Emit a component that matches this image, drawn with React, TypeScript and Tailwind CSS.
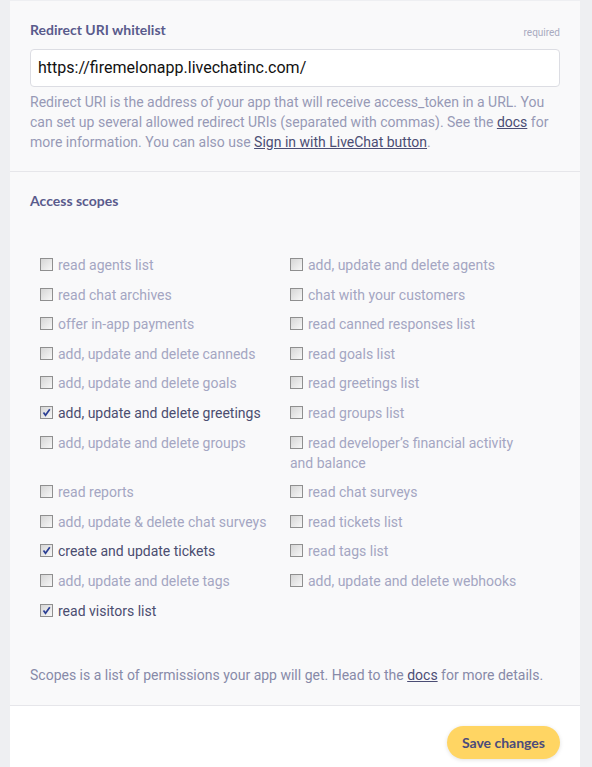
import React from 'react';

type Scope = { label: string; checked?: boolean };

const scopes: Scope[] = [
  { label: 'read agents list' },
  { label: 'add, update and delete agents' },
  { label: 'read chat archives' },
  { label: 'chat with your customers' },
  { label: 'offer in-app payments' },
  { label: 'read canned responses list' },
  { label: 'add, update and delete canneds' },
  { label: 'read goals list' },
  { label: 'add, update and delete goals' },
  { label: 'read greetings list' },
  { label: 'add, update and delete greetings', checked: true },
  { label: 'read groups list' },
  { label: 'add, update and delete groups' },
  { label: 'read developer’s financial activity and balance' },
  { label: 'read reports' },
  { label: 'read chat surveys' },
  { label: 'add, update & delete chat surveys' },
  { label: 'read tickets list' },
  { label: 'create and update tickets', checked: true },
  { label: 'read tags list' },
  { label: 'add, update and delete tags' },
  { label: 'add, update and delete webhooks' },
  { label: 'read visitors list', checked: true },
];

const Checkbox: React.FC<{ checked?: boolean }> = ({ checked }) => (
  <span className="relative inline-block w-[13px] h-[13px] mr-[5px] align-[-1px] border border-[#8f8f8f] bg-gradient-to-br from-[#d6d6d6] to-[#f7f7f7]">
    {checked && (
      <svg viewBox="0 0 11 11" className="absolute inset-0 w-[11px] h-[11px]">
        <path d="M2.5 5.5 L4.5 8.2 L8.8 2.2" fill="none" stroke="#2b3f94" strokeWidth="1.7" />
      </svg>
    )}
  </span>
);

const App: React.FC = () => {
  return (
    <div className="h-screen overflow-hidden bg-[#eeeff2] pt-px pl-[10px] pr-[12px] font-['Roboto',sans-serif]">
      <div className="bg-[#f9f9fa]">
        {/* redirect uri */}
        <div className="px-5 pt-5 pb-[19px] border-b border-[#e6e6ea]">
          <div className="flex items-end justify-between mb-[10px]">
            <h3 className="font-['Lato',sans-serif] text-[14px] leading-[18px] font-bold text-[#595b8c]">Redirect URI whitelist</h3>
            <span className="text-[10px] leading-[12px] text-[#a8aac0]">required</span>
          </div>
          <div className="h-[38px] bg-white border border-[#dcdde3] rounded-[4px] flex items-center pl-[7px] text-[16px] text-[#111]">
            https://firemelonapp.livechatinc.com/
          </div>
          <p className="mt-[5px] text-[14px] leading-[20px] text-[#9799b6]">
            Redirect URI is the address of your app that will receive access_token in a URL. You can set up several allowed redirect URIs (separated with commas). See the{' '}
            <a className="underline text-[#4b4d74]">docs</a> for more information. You can also use{' '}
            <a className="underline text-[#4b4d74]">Sign in with LiveChat button</a>.
          </p>
        </div>

        {/* scopes */}
        <div className="px-5 pt-5 pb-5 border-b border-[#e6e6ea]">
          <h3 className="font-['Lato',sans-serif] text-[14px] leading-[18px] font-bold text-[#595b8c]">Access scopes</h3>
          <div className="mt-[45px] ml-[10px] grid grid-cols-[250px_250px] gap-y-[9.6px]">
            {scopes.map((s) => (
              <label
                key={s.label}
                className={`block pr-[12px] text-[14px] leading-[20px] ${s.checked ? 'text-[#4b4d70]' : 'text-[#a4a6c2]'}`}
              >
                <Checkbox checked={s.checked} />
                {s.label}
              </label>
            ))}
          </div>
          <p className="mt-[44px] text-[14px] leading-[20px] text-[#878aa8]">
            Scopes is a list of permissions your app will get. Head to the{' '}
            <a className="underline text-[#4b4d74]">docs</a> for more details.
          </p>
        </div>

        {/* footer */}
        <div className="bg-white px-5 pt-[20px] pb-5 flex justify-end">
          <button className="h-[33px] px-[15px] rounded-full bg-[#ffd563] font-['Lato',sans-serif] text-[14px] font-bold text-[#4b4b7c] shadow-[0_1px_4px_rgba(0,0,0,0.12)]">
            Save changes
          </button>
        </div>
      </div>
    </div>
  );
};

export default App;
